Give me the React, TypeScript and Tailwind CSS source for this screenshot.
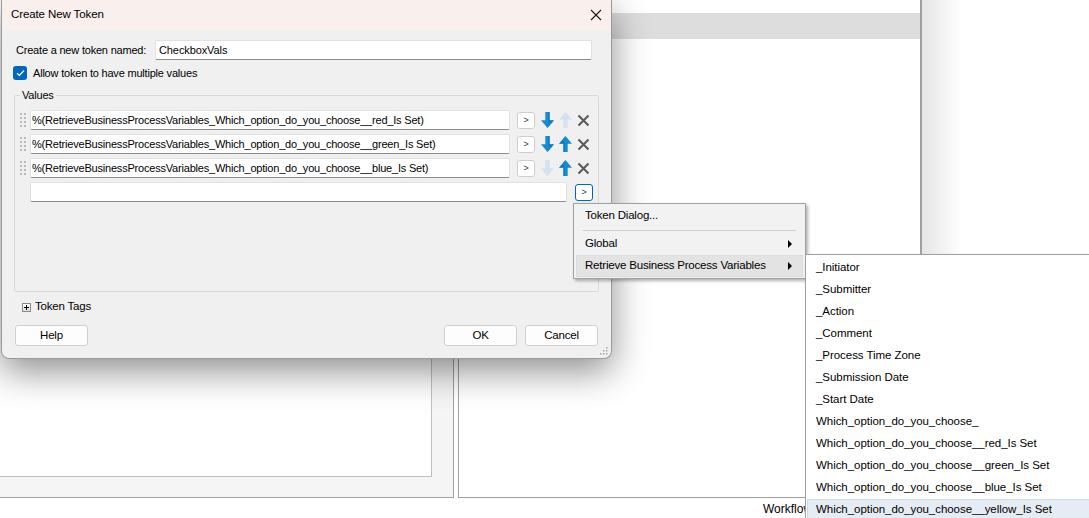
import type { ReactNode } from "react";

const values = [
  { text: "%(RetrieveBusinessProcessVariables_Which_option_do_you_choose__red_Is Set)", down: true, up: false },
  { text: "%(RetrieveBusinessProcessVariables_Which_option_do_you_choose__green_Is Set)", down: true, up: true },
  { text: "%(RetrieveBusinessProcessVariables_Which_option_do_you_choose__blue_Is Set)", down: false, up: true },
];

const variables = [
  "_Initiator",
  "_Submitter",
  "_Action",
  "_Comment",
  "_Process Time Zone",
  "_Submission Date",
  "_Start Date",
  "Which_option_do_you_choose_",
  "Which_option_do_you_choose__red_Is Set",
  "Which_option_do_you_choose__green_Is Set",
  "Which_option_do_you_choose__blue_Is Set",
  "Which_option_do_you_choose__yellow_Is Set",
];

function Arrow({ up, enabled }: { up?: boolean; enabled: boolean }) {
  return (
    <svg width="13" height="16" viewBox="0 0 13 16" className={up ? "rotate-180" : ""}>
      <path d="M4.3 0H8.7V8.2H13L6.5 16L0 8.2H4.3Z" fill={enabled ? "#168bd6" : "#d5e2ed"} />
      {enabled && <path d="M8.7 0V8.2H13L6.5 16L8 12.5H10.2L7.4 9.5V0Z" fill="#0b6cb2" opacity="0.55" />}
    </svg>
  );
}

function RemoveIcon() {
  return (
    <svg width="13" height="13" viewBox="0 0 13 13">
      <path d="M1.5 1.5L11.5 11.5M11.5 1.5L1.5 11.5" stroke="#5b5b5b" strokeWidth="2.1" />
    </svg>
  );
}

function Grip() {
  return (
    <svg width="7" height="16" viewBox="0 0 7 16">
      {[1, 5, 9, 13].map((y) => (
        <g key={y} fill="#b9b9b9">
          <rect x="0" y={y} width="2" height="2" />
          <rect x="4" y={y} width="2" height="2" />
        </g>
      ))}
    </svg>
  );
}

function TokenButton({ focused }: { focused?: boolean }) {
  return (
    <button
      type="button"
      className={
        focused
          ? "flex h-[17px] w-[18px] items-center justify-center rounded-[3px] border border-[#0067c0] bg-white text-[9px] leading-none text-[#333]"
          : "flex h-[17px] w-[18px] items-center justify-center rounded-[3px] border border-[#cfcfcf] bg-white text-[9px] leading-none text-[#333]"
      }
    >
      &gt;
    </button>
  );
}

function Field({ width, children }: { width: string; children?: ReactNode }) {
  return (
    <div
      className={`${width} flex h-[20px] items-center overflow-hidden whitespace-nowrap rounded-[2px] border border-[#e1e1e1] border-b-[#8c8c8c] bg-white pl-[1px] text-[11px] tracking-[-0.2px] text-black`}
    >
      {children}
    </div>
  );
}

function DialogButton({ label, width }: { label: string; width: string }) {
  return (
    <button
      type="button"
      className={`${width} h-[21px] rounded-[3px] border border-[#d0d0d0] bg-[#fdfdfd] text-[11.5px] text-black`}
    >
      {label}
    </button>
  );
}

function MenuArrow() {
  return (
    <svg width="4" height="8" viewBox="0 0 4 8">
      <path d="M0 0L4 4L0 8Z" fill="#000" />
    </svg>
  );
}

export default function App() {
  return (
    <div className="relative h-[518px] w-[1089px] overflow-hidden bg-white font-['Liberation_Sans',Arial,sans-serif] text-black">
      {/* page behind the dialog */}
      <div className="flex h-[498px]">
        <div className="h-[498px] w-[454px] border-r border-b border-[#a0a0a0] bg-[#f5f5f5]">
          <div className="h-[477px] w-[432px] border-r border-b border-[#c0c0c0] bg-white" />
        </div>
        <div className="ml-[4px] h-[498px] w-[464px] border-l border-r-2 border-b border-[#a0a0a0] bg-white pt-[13px]">
          <div className="h-[26px] bg-[#dddddd]" />
        </div>
        <div className="h-[498px] flex-1 border-b border-[#a0a0a0] bg-linear-to-r from-[#e6e6e6] via-white via-[40px] to-white" />
      </div>
      <div className="pl-[763px] pt-[3px] text-[12px] leading-[16px]">Workflow</div>

      {/* Create New Token dialog */}
      <div className="absolute left-[1px] top-0 w-[611px] overflow-hidden rounded-b-[8px] border border-t-0 border-[#9a9a9a] bg-[#f0f0f0] shadow-[0_12px_36px_rgba(0,0,0,0.45)]">
        <div className="flex h-[30px] items-center justify-between bg-[#f9f0ee] pl-[9px] pr-[9px]">
          <span className="text-[11.5px] tracking-[-0.1px]">Create New Token</span>
          <svg width="12" height="12" viewBox="0 0 12 12">
            <path d="M1 1L11 11M11 1L1 11" stroke="#1a1a1a" strokeWidth="1.1" />
          </svg>
        </div>

        <div className="px-[12px] pb-[12px] pt-[10px] text-[11px] tracking-[-0.2px]">
          <div className="flex items-center">
            <span className="w-[141px] pl-[2px]">Create a new token named:</span>
            <Field width="w-[437px]">
              <span className="pl-[2px] tracking-[-0.1px]">CheckboxVals</span>
            </Field>
          </div>

          <div className="mt-[5px] flex h-[16px] items-center">
            <span className="-ml-[1px] flex h-[14px] w-[14px] items-center justify-center rounded-[3px] bg-[#0067c0]">
              <svg width="9" height="8" viewBox="0 0 9 8">
                <path d="M1 4.2L3.4 6.5L8 1.5" stroke="#fff" strokeWidth="1.2" fill="none" />
              </svg>
            </span>
            <span className="ml-[6px]">Allow token to have multiple values</span>
          </div>

          <fieldset className="mt-[7px] h-[204px] w-[585px] rounded-[2px] border border-[#d9d9d9] pl-[5px]">
            <legend className="px-[2px] text-[11px] leading-[14px]">Values</legend>
            <div className="flex flex-col gap-[4px] pt-[8px]">
              {values.map((v) => (
                <div key={v.text} className="flex h-[20px] items-center">
                  <Grip />
                  <div className="ml-[3px]">
                    <Field width="w-[480px]">{v.text}</Field>
                  </div>
                  <div className="ml-[7px]">
                    <TokenButton />
                  </div>
                  <div className="ml-[6px] flex items-center gap-[5px]">
                    <Arrow enabled={v.down} />
                    <Arrow up enabled={v.up} />
                  </div>
                  <div className="ml-[5px]">
                    <RemoveIcon />
                  </div>
                </div>
              ))}
              <div className="flex h-[20px] items-center">
                <div className="ml-[10px]">
                  <Field width="w-[537px]" />
                </div>
                <div className="ml-[8px]">
                  <TokenButton focused />
                </div>
              </div>
            </div>
          </fieldset>

          <div className="mt-[7px] flex h-[16px] items-center pl-[8px]">
            <span className="flex h-[9px] w-[9px] items-center justify-center border border-[#8a8a8a] bg-linear-to-b from-white to-[#dedede]">
              <svg width="7" height="7" viewBox="0 0 7 7">
                <path d="M1 3.5H6M3.5 1V6" stroke="#000" strokeWidth="1" />
              </svg>
            </span>
            <span className="ml-[4px] text-[11.5px]">Token Tags</span>
          </div>

          <div className="mt-[10px] flex items-center">
            <div className="ml-[1px]">
              <DialogButton label="Help" width="w-[73px]" />
            </div>
            <div className="ml-auto mr-[1px] flex gap-[8px]">
              <DialogButton label="OK" width="w-[73px]" />
              <DialogButton label="Cancel" width="w-[73px]" />
            </div>
          </div>
        </div>
        <svg width="9" height="9" viewBox="0 0 9 9" className="absolute bottom-[3px] right-[3px]">
          {[
            [7, 1],
            [4, 4],
            [7, 4],
            [1, 7],
            [4, 7],
            [7, 7],
          ].map(([x, y]) => (
            <rect key={`${x}-${y}`} x={x} y={y} width="1.5" height="1.5" fill="#a8a8a8" />
          ))}
        </svg>
      </div>

      {/* context menu */}
      <div className="absolute left-[573px] top-[203px] w-[233px] border border-[#a0a0a0] bg-[#f2f2f2] py-[1px] pl-[2px] pr-[2px] text-[11.5px] tracking-[-0.2px] shadow-[2px_2px_3px_rgba(0,0,0,0.3)]">
        <div className="flex h-[22px] items-center pl-[9px]">Token Dialog...</div>
        <div className="flex h-[6px] items-center px-[7px]">
          <div className="h-px w-full bg-[#cdcdcd]" />
        </div>
        <div className="flex h-[22px] items-center justify-between pl-[9px] pr-[11px]">
          <span>Global</span>
          <MenuArrow />
        </div>
        <div className="flex h-[22px] items-center justify-between border border-[#d6dde6] bg-[#e3e3e3] pl-[8px] pr-[10px]">
          <span>Retrieve Business Process Variables</span>
          <MenuArrow />
        </div>
      </div>

      {/* submenu */}
      <div className="absolute left-[805px] top-[254px] w-[300px] border border-[#a0a0a0] bg-white pl-[1px] pt-[2px] text-[11.5px] tracking-[-0.05px] shadow-[2px_2px_3px_rgba(0,0,0,0.3)]">
        {variables.map((name, i) =>
          i === variables.length - 1 ? (
            <div key={name} className="flex h-[22px] items-center border border-[#c9dcee] bg-[#e5ecf3] pl-[8px]">
              {name}
            </div>
          ) : (
            <div key={name} className="flex h-[22px] items-center pl-[9px]">
              {name}
            </div>
          )
        )}
      </div>
    </div>
  );
}
